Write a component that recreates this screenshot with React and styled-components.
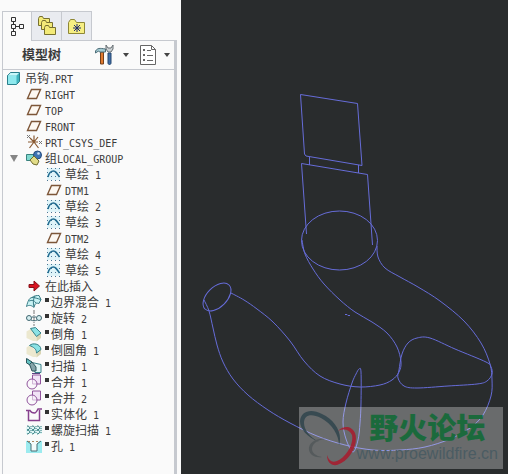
import React from 'react'
import styled, { createGlobalStyle } from 'styled-components';

const GlobalStyle = createGlobalStyle`
* {
  box-sizing: border-box;
}
body {
  margin: 0;
  background: #fafafa;
  color: #3c3c3c;
  font-family: "Liberation Sans", "Noto Sans CJK SC", sans-serif;
}
button {
  font: inherit;
  color: inherit;
  margin: 0;
  padding: 0;
  border: 0;
  background: none;
}
`

const treeItems = [
  { icon: 'part', text: '吊钩.PRT', level: 0 },
  { icon: 'plane', text: 'RIGHT', level: 1 },
  { icon: 'plane', text: 'TOP', level: 1 },
  { icon: 'plane', text: 'FRONT', level: 1 },
  { icon: 'csys', text: 'PRT_CSYS_DEF', level: 1 },
  { icon: 'group', text: '组LOCAL_GROUP', level: 1, open: true },
  { icon: 'sketch', text: '草绘 1', level: 2 },
  { icon: 'plane', text: 'DTM1', level: 2 },
  { icon: 'sketch', text: '草绘 2', level: 2 },
  { icon: 'sketch', text: '草绘 3', level: 2 },
  { icon: 'plane', text: 'DTM2', level: 2 },
  { icon: 'sketch', text: '草绘 4', level: 2 },
  { icon: 'sketch', text: '草绘 5', level: 2 },
  { icon: 'insert', text: '在此插入', level: 1 },
  { icon: 'blend', text: '边界混合 1', level: 1, mark: true },
  { icon: 'revolve', text: '旋转 2', level: 1, mark: true },
  { icon: 'chamfer', text: '倒角 1', level: 1, mark: true },
  { icon: 'round', text: '倒圆角 1', level: 1, mark: true },
  { icon: 'sweep', text: '扫描 1', level: 1, mark: true },
  { icon: 'merge', text: '合并 1', level: 1, mark: true },
  { icon: 'merge', text: '合并 2', level: 1, mark: true },
  { icon: 'solidify', text: '实体化 1', level: 1, mark: true },
  { icon: 'helix', text: '螺旋扫描 1', level: 1, mark: true },
  { icon: 'hole', text: '孔 1', level: 1, mark: true },
]

const icons = {
  part: (
    <>
      <path d="M1.500 5.500 4.500 2.500h9v9l-3 3h-9z" fill="#3fb4bd" stroke="#2a7f8c" />
      <path d="M2 5.500h8.500v8.500H2z" fill="#8fe9ee" />
      <path d="M2 5.500 4.500 3H13l-2.500 2.500z" fill="#c9f8fa" />
    </>
  ),
  plane: <path d="M5.500 3.500h9l-4 9h-9z" fill="#fdf8f2" stroke="#7d5638" strokeWidth="1.400" />,
  csys: (
    <>
      <path d="M8 8H2M8 8l4.500 6M8 8 3.500 14M8 8V1.500M8 8l4-5M8 8 4 4M8 8h4" stroke="#8a5a32" strokeWidth="1.200" />
      <path d="m1 1 3 3m0-3L1 4m12 3 3 3m0-3-3 3" stroke="#777" />
    </>
  ),
  group: (
    <>
      <path d="M.5 4.500h9v6h-9z" fill="#7fd9cf" stroke="#39837f" />
      <circle cx="11.500" cy="5" r="4" fill="#3f74b4" stroke="#254a7c" />
      <circle cx="12.500" cy="3.500" r="1.300" fill="#d3e4f6" />
      <path d="m8 6 5 5-2 4-4-1-3-4z" fill="#e2dc88" stroke="#6e6a2e" />
    </>
  ),
  sketch: (
    <>
      <path d="M1 2h13v12H1z" fill="#dff4f9" />
      <path d="M1.500 2v13M5.500 2v13M9.500 2v13M13.500 2v13" stroke="#4c7794" strokeDasharray="1 3" />
      <path d="M2 11c1-4 3-6 5.500-6 2 0 3 1.500 6 6" stroke="#226c91" strokeWidth="1.500" />
    </>
  ),
  insert: <path d="M3 6.500h5V3l5.500 5L8 13V9.500H3z" fill="#d91421" stroke="#861018" />,
  blend: (
    <>
      <path d="M.5 12.500C2 7 3 4 6 3.500c2-2 5-2 7-2l2 4-2 4c-3-1-4 0-5 4-2-2-5-3-7.500-1z" fill="#c9f3f5" stroke="#3a7c86" />
      <path d="M3 7c3-1 5-1 7 2M6 3.500c3 0 5 1 9 2M9 2C7 5 7 9 8 13" stroke="#3a7c86" />
    </>
  ),
  revolve: (
    <>
      <path d="M8 0v16" stroke="#777" strokeDasharray="4 1 1 1" />
      <circle cx="3" cy="8" r="2.500" fill="#d5eef0" stroke="#3f6670" />
      <circle cx="13" cy="8" r="2.500" fill="#d5eef0" stroke="#3f6670" />
      <path d="M5 10c2 1 4 1 6 0M6 7h4" stroke="#3f6670" />
    </>
  ),
  chamfer: (
    <>
      <path d="m.5 5.500 5-3 5 7.500v5H7L.5 12z" fill="#ece8cf" />
      <path d="M10.500 10 15 6.500V12l-4.500 3.500z" fill="#d9d5b4" />
      <path d="m4.500 2.500 5-1L15 7l-4.500 3.500z" fill="#8be2e4" stroke="#37828a" />
    </>
  ),
  round: (
    <>
      <path d="m.5 5.500 4-3 6 7.500v5H7L.5 12z" fill="#ece8cf" />
      <path d="M10.500 10 15 6.500V12l-4.500 3.500z" fill="#d9d5b4" />
      <path d="M3.500 3.500c3-3 11-2 11.500 4L10.500 11c0-4-3-6-7-7.500z" fill="#8be2e4" stroke="#37828a" />
    </>
  ),
  sweep: (
    <>
      <path d="M3.500 6.500 1 5V1l5 3.500 9 2v8H9z" fill="#dff5f5" stroke="#3a8088" />
      <path d="m3 5 3-1 4 5v4H6z" fill="#84a4a9" stroke="#2f565c" />
      <path d="M.500.500 6 4 3.500 6.500.500 5z" fill="#64c3c3" stroke="#2f565c" />
      <path d="M6 15.500h8" stroke="#5c4482" />
    </>
  ),
  merge: (
    <>
      <path d="M6.500 1h8v9h-8z" fill="#f1e3f6" stroke="#91559d" />
      <circle cx="6" cy="10" r="5" fill="#faf7fb" fillOpacity=".6" stroke="#91559d" />
    </>
  ),
  solidify: <path d="M0 4.500h4c1 2 3 2.500 4.500 2.500S11 5 12 3h4M2.500 5v9.500h11V4" fill="none" stroke="#87418e" strokeWidth="1.500" />,
  helix: (
    <>
      <path d="M0 5h16v7H0z" fill="#e1f6f6" />
      <path d="M1 4c4 0 3 4 0 4 4 0 3 4 0 4m5-8c4 0 3 4 0 4 4 0 3 4 0 4m5-8c4 0 3 4 0 4 4 0 3 4 0 4" stroke="#277579" />
      <path d="M5 4v8m5-8v8m5-8v8" stroke="#277579" strokeDasharray="1 1" />
    </>
  ),
  hole: (
    <>
      <path d="M0 3h16v12H0z" fill="#9cebef" />
      <path d="M2 2h12l-3 4v7H5V6z" fill="#f2fbfb" />
      <path d="m1 3 4 3v7h6V6l4-3" stroke="#496f75" />
      <path d="M2 3.500h12" stroke="#a86" strokeDasharray="2 2" />
    </>
  ),
}

// smooth curve through a list of points
function curve(points, closed) {
  const n = points.length
  const at = (i) => (closed ? points[(i + n) % n] : points[Math.max(0, Math.min(n - 1, i))])
  let d = `M${points[0]}`
  for (let i = 0; i < (closed ? n : n - 1); i++) {
    const [a, b, c, e] = [at(i - 1), at(i), at(i + 1), at(i + 2)]
    d += `C${b[0] + (c[0] - a[0]) / 6},${b[1] + (c[1] - a[1]) / 6} ${c[0] - (e[0] - b[0]) / 6},${c[1] - (e[1] - b[1]) / 6} ${c}`
  }
  return d
}

const innerEdge = [
  [302, 240], [305, 254], [313, 269], [324, 284], [340, 300], [355, 312], [372, 322], [387, 333], [397, 347], [401, 362],
  [399, 372], [392, 380], [380, 385], [360, 387], [340, 384], [320, 376], [304, 361], [290, 341], [273, 322], [257, 309],
  [244, 300], [231, 293],
]
const outerEdge = [
  [204, 300], [209, 311], [213, 328], [217, 345], [223, 362], [233, 379], [248, 395], [268, 410], [290, 423], [317, 436],
  [345, 445], [373, 450], [400, 450], [425, 447], [450, 439], [470, 428], [483, 415], [491, 396], [492, 380], [490, 364],
  [481, 343], [464, 321], [440, 301], [418, 287], [400, 277], [385, 268], [378, 257], [377, 246],
]
const wideSection = [
  [399, 370], [402, 354], [408, 343], [417, 338], [430, 338], [455, 349], [486, 362], [491, 367], [492, 374], [487, 381],
  [477, 384], [448, 386], [417, 388], [404, 386], [398, 378],
]
const thinSection = [
  [359, 369], [356, 374], [352, 383], [346, 403], [343, 422], [346, 439], [353, 452], [358, 440], [360, 423], [361, 403],
  [361, 372],
]

function Label({ text }) {
  return (
    <Name>
      {text.match(/[\x20-\x7e]+|[^\x20-\x7e]+/g).map((part, i) =>
        part.charCodeAt(0) < 127 ? <Latin key={i}>{part}</Latin> : part
      )}
    </Name>
  )
}

function ModelTree() {
  return (
    <Tree>
      {treeItems.map((item, i) => (
        <Item key={i} $level={item.level}>
          {item.open && <Toggle aria-label="Collapse group"><Caret /></Toggle>}
          <ItemIcon viewBox="0 0 16 16">{icons[item.icon]}</ItemIcon>
          {item.mark && <Mark />}
          <Label text={item.text} />
        </Item>
      ))}
    </Tree>
  )
}

function Folder({ x, y }) {
  return <path transform={`translate(${x} ${y})`} d="M.5 9.500v-7l1-2h3l1 2h6v7z" fill="#f3ea78" stroke="#77702f" />
}

function Sidebar() {
  return (
    <Side>
      <Tabs>
        <Tab $active aria-label="Model tree">
          <svg width="16" height="20" fill="none" stroke="#333">
            <path d="M2.500.500h4v4h-4zM2.500 7.500h4v4h-4zM2.500 14.500h4v4h-4zM10.500 7.500h4v4h-4zM4.500 5v3M4.500 12v3M7 9.500h4" />
          </svg>
        </Tab>
        <Tab aria-label="Folder browser">
          <svg width="20" height="20">
            <Folder x="1" y="0" />
            <Folder x="4" y="4" />
            <Folder x="7" y="9" />
          </svg>
        </Tab>
        <Tab aria-label="Favorites">
          <svg width="18" height="18" fill="none">
            <path d="M.5 16.500v-11l2-3h4l2 3h8v11z" fill="#f6ee83" stroke="#8e8736" />
            <path d="M9 7v8M5 11h8M6 8l6 6M12 8l-6 6" stroke="#222c6e" />
          </svg>
        </Tab>
      </Tabs>
      <Toolbar>
        <Title>模型树</Title>
        <Tool aria-label="Settings">
          <svg width="20" height="22" fill="none">
            <path d="M5.500 8h3v12h-3z" fill="#e07a30" stroke="#74401c" />
            <path d="M.5 7c2-3 4-3 10-2v3h-6l-1-1-3 2z" fill="#a4cbd3" stroke="#4d6d78" />
            <path d="M13 9h3v10c0 2-3 2-3 0z" fill="#416fa9" stroke="#24466f" />
            <path d="M11 1v4l2 3h3l2-3V1l-2 3h-3z" fill="#ccd1d4" stroke="#666e73" />
          </svg>
          <Caret $small />
        </Tool>
        <Tool aria-label="Show">
          <svg width="16" height="20" fill="none" stroke="#666">
            <path d="M.5.500h11l4 4v15H.5z" fill="#fff" />
            <path d="M11.500.500v4h4M7 5.500h4M7 10.500h6M7 15.500h6" />
            <path d="M3.500 4.500h1v1h-1zM3.500 9.500h1v1h-1zM3.500 14.500h1v1h-1z" stroke="#333" />
          </svg>
          <Caret $small />
        </Tool>
      </Toolbar>
      <ModelTree />
    </Side>
  )
}

function Watermark() {
  return (
    <Banner>
      <Emblem viewBox="0 0 58 62" fill="none">
        <path d="M20 35C8 30 1 22 1 14 2 4 12 1 23 7c13 6 21 19 17 31 0-10-7-21-18-27C12 6 5 8 5 16c0 7 6 14 15 19z" fill="#33474f" />
        <path d="M26 32c-9-1-17 4-16 11 1 5 6 8 13 7-6-1-10-4-10-8 0-5 5-9 13-10z" fill="#53595b" />
        <path d="M39 24c5-5 13-6 17 2 4 11-5 28-18 32-6 1-10-3-10-10 2 6 5 8 10 6 9-4 17-17 15-26-2-5-8-7-14-4z" fill="#a51f31" />
      </Emblem>
      <Brand>
        <BrandName>野火论坛</BrandName>
        <Site href="#">www.proewildfire.cn</Site>
      </Brand>
    </Banner>
  )
}

function App() {
  return (
    <Wrapper>
      <GlobalStyle />
      <Sidebar />
      <Viewport>
        <Model viewBox="181 0 327 474">
          <path d="M300.500 94.500 357.500 103.500 362 165.500 306 156 304.500 154z" />
          <path d="M309.500 157v8M358.500 165v8M306.500 234 301.500 163.500 367.500 174.500 372.500 245" />
          <ellipse cx="339.500" cy="240.500" rx="38" ry="29.500" />
          <ellipse cx="217" cy="297" rx="17" ry="10" transform="rotate(-45 217 297)" />
          <path d={curve(innerEdge)} />
          <path d={curve(outerEdge)} />
          <path d={curve(wideSection, true)} />
          <path d={curve(thinSection, true)} />
          <path d="M345 314.500h2l1 1h2" />
        </Model>
        <Watermark />
      </Viewport>
    </Wrapper>
  )
}

export default App

const Wrapper = styled.div`
display: flex;
min-height: 100vh;
`

const Side = styled.aside`
flex: 0 0 181px;
display: flex;
flex-direction: column;
padding: 11px 4px 0 2px;
background: #fafafa;
`

const Tabs = styled.div`
display: flex;

&::after {
  content: "";
  flex: 1;
  border-bottom: 1px solid #c6c9cf;
}
`

const Tab = styled.button`
display: flex;
align-items: center;
justify-content: center;
width: 30px;
height: 30px;
border: 1px solid #c6c9cf;
border-bottom: 0;
background: ${props => props.$active ? '#fafafa' : '#e9ebf0'};

& + & {
  border-left: 0;
  border-bottom: 1px solid #c6c9cf;
}
`

const Toolbar = styled.div`
display: flex;
align-items: center;
gap: 11px;
height: 29px;
padding: 0 4px 0 19px;
border: 1px solid #c6c9cf;
border-right: 3px solid #c6c9cf;
border-top: 0;
`

const Title = styled.h1`
margin: 0 auto 0 0;
font-size: 13px;
line-height: 16px;
font-weight: 700;
`

const Tool = styled.button`
display: flex;
align-items: center;
gap: 8px;
`

const Caret = styled.i`
border: solid transparent;
border-width: ${props => props.$small ? '4px 3px 0' : '7px 4px 0'};
border-top-color: ${props => props.$small ? '#444' : '#858585'};
`

const Tree = styled.ul`
flex: 1;
margin: 0;
padding: 0;
list-style: none;
border-left: 1px solid #c6c9cf;
border-right: 3px solid #c6c9cf;
`

const Item = styled.li`
position: relative;
display: flex;
align-items: center;
height: 16px;
padding-left: ${props => [3, 23, 43][props.$level]}px;
`

const Toggle = styled.button`
position: absolute;
left: 7px;
display: flex;
`

const ItemIcon = styled.svg`
width: 16px;
height: 16px;
margin-right: 3px;
fill: none;
`

const Mark = styled.i`
width: 4px;
height: 4px;
margin: 0 2px 4px 0;
background: #333;
`

const Name = styled.span`
font-family: "Noto Sans CJK SC", sans-serif;
font-size: 12px;
line-height: 14px;
white-space: pre;
`

const Latin = styled.span`
font-family: "DejaVu Sans Mono", monospace;
font-size: 10px;
line-height: 10px;
`

const Viewport = styled.main`
position: relative;
flex: 1;
background: #292c2d;
`

const Model = styled.svg`
display: block;
width: 100%;
max-height: 100vh;
fill: none;
stroke: #666cd8;
`

const Banner = styled.div`
position: absolute;
right: 5px;
bottom: 5px;
display: flex;
align-items: center;
height: 62px;
padding-right: 5px;
background: rgba(255, 255, 255, 0.3);
`

const Emblem = styled.svg`
width: 58px;
height: 62px;
opacity: 0.9;
`

const Brand = styled.div`
display: flex;
flex-direction: column;
align-items: center;
`

const BrandName = styled.strong`
color: #1b6a3c;
font-family: "Noto Sans CJK SC", sans-serif;
font-size: 29px;
font-weight: 900;
line-height: 32px;
`

const Site = styled.a`
color: #4b5c63;
font-size: 16px;
line-height: 24px;
text-decoration: none;
`
